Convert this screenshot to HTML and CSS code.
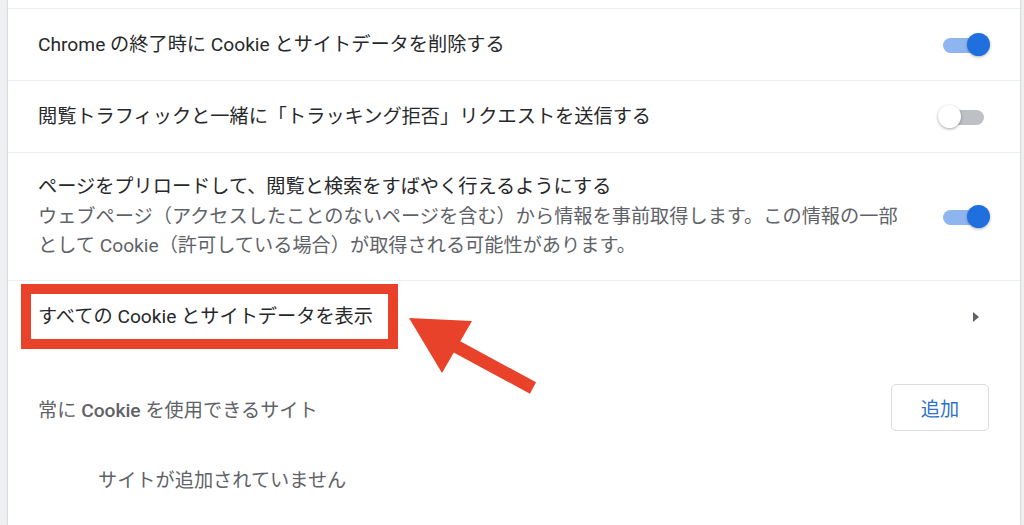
FILE: index.html
```html
<!DOCTYPE html>
<html lang="ja">
<head>
<meta charset="utf-8">
<title>Cookie settings</title>
<link rel="stylesheet" href="styles.css">
</head>
<body>
<div class="card">
  <div class="top-gap"></div>
  <div class="row">
    <div class="label">Chrome の終了時に Cookie とサイトデータを削除する</div>
    <div class="toggle on"><span class="track"></span><span class="knob"></span></div>
  </div>
  <div class="row">
    <div class="label">閲覧トラフィックと一緒に「トラッキング拒否」リクエストを送信する</div>
    <div class="toggle"><span class="track"></span><span class="knob"></span></div>
  </div>
  <div class="row tall">
    <div class="text">
      <div class="label">ページをプリロードして、閲覧と検索をすばやく行えるようにする</div>
      <div class="sub">ウェブページ（アクセスしたことのないページを含む）から情報を事前取得します。この情報の一部として Cookie（許可している場合）が取得される可能性があります。</div>
    </div>
    <div class="toggle on"><span class="track"></span><span class="knob"></span></div>
  </div>
  <div class="row link">
    <div class="label">すべての Cookie とサイトデータを表示</div>
    <div class="arrow-icon"><svg width="24" height="24" viewBox="0 0 24 24"><path d="M9 7l6 5-6 5z" fill="#5f6368"/></svg></div>
  </div>
  <div class="section-head">
    <div class="head-label">常に <span class="strong">Cookie</span> を使用できるサイト</div>
    <button class="add-btn">追加</button>
  </div>
  <div class="empty">サイトが追加されていません</div>
</div>

<div class="highlight"></div>
<svg class="pointer" width="1024" height="525" viewBox="0 0 1024 525">
  <polygon points="409,318 472,321 442,373" fill="#e8432a"/>
  <line x1="448" y1="342" x2="533" y2="388" stroke="#e8432a" stroke-width="13"/>
</svg>
</body>
</html>
```

FILE: styles.css
```css
html, body {
  margin: 0;
  padding: 0;
}
body {
  background: #eef0f2;
  font-family: "Roboto", "Noto Sans CJK JP", sans-serif;
  color: #27282b;
  width: 1024px;
  height: 525px;
  overflow: hidden;
  position: relative;
}
.card {
  margin-left: 8px;
  width: 1012px;
  height: 525px;
  background: #ffffff;
  box-shadow: 0 0 1px rgba(60, 64, 67, 0.35), 0 0 3px rgba(60, 64, 67, 0.12);
}
.top-gap {
  height: 8px;
}
.row {
  box-sizing: border-box;
  height: 72px;
  border-top: 1px solid #eceef0;
  padding: 0 30px;
  display: flex;
  align-items: center;
  justify-content: space-between;
}
.row.tall {
  height: 128px;
}
.label {
  font-size: 19.2px;
  line-height: 29.5px;
}
.text {
  width: 876px;
}
.sub {
  font-size: 19.2px;
  line-height: 29.5px;
  color: #5f6368;
}
.toggle {
  position: relative;
  width: 47px;
  height: 24px;
  flex: none;
}
.toggle .track {
  position: absolute;
  left: 0;
  top: 5px;
  width: 41px;
  height: 15px;
  border-radius: 8px;
  background: #bdc1c6;
}
.toggle .knob {
  position: absolute;
  top: 0;
  left: -5px;
  width: 23px;
  height: 23px;
  border-radius: 50%;
  background: #ffffff;
  box-shadow: 0 1px 3px rgba(0, 0, 0, 0.35);
}
.toggle.on .track {
  background: #8fb5f0;
}
.toggle.on .knob {
  left: 24px;
  background: #1f6fde;
  box-shadow: 0 1px 3px rgba(0, 0, 0, 0.3);
}
.arrow-icon {
  width: 24px;
  height: 24px;
  margin-right: 2px;
}
.arrow-icon svg {
  display: block;
}
.section-head {
  margin-top: 32px;
  padding: 0 31px 0 30px;
  display: flex;
  align-items: center;
  justify-content: space-between;
}
.head-label {
  font-size: 19.2px;
  line-height: 29.5px;
  color: #5f6368;
  padding-top: 6px;
}
.head-label .strong {
  font-weight: 500;
}
.add-btn {
  width: 98px;
  height: 47px;
  background: #ffffff;
  border: 1px solid #dadce0;
  border-radius: 5px;
  color: #2f72cc;
  font-family: "Roboto", "Noto Sans CJK JP", sans-serif;
  font-size: 19.2px;
  padding: 0;
}
.empty {
  margin-top: 35px;
  padding-left: 90px;
  font-size: 19.2px;
  line-height: 29.5px;
  color: #5f6368;
}
.highlight {
  position: absolute;
  left: 21px;
  top: 284px;
  width: 357px;
  height: 45px;
  border: 10.5px solid #e8432a;
}
.pointer {
  position: absolute;
  left: 0;
  top: 0;
  pointer-events: none;
}
```
